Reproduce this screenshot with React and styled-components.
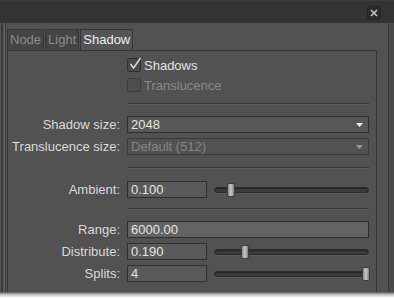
import styled, { createGlobalStyle } from 'styled-components'

const GlobalStyle = createGlobalStyle`
  html, body {
    margin: 0;
    padding: 0;
    background: #ffffff;
  }
  body {
    font-family: "Liberation Sans", Arial, sans-serif;
    font-size: 13px;
  }
`

const Window = styled.div`
  width: 394px;
  height: 298px;
  display: flex;
  flex-direction: column;
  background: #525252;
  overflow: hidden;
`

const TitleBar = styled.div`
  flex: none;
  height: 23px;
  box-sizing: border-box;
  background: #333333;
  border-top: 1px solid #3b3b3b;
  display: flex;
  justify-content: flex-end;
  align-items: flex-start;
  padding: 5px 13px 0 0;
`

const CloseButton = styled.button`
  width: 14px;
  height: 14px;
  padding: 0;
  box-sizing: border-box;
  background: #2c2c2c;
  border: 1px solid #262626;
  border-radius: 2px;
  display: flex;
  align-items: center;
  justify-content: center;
`

const Body = styled.div`
  flex: none;
  height: 269px;
  display: flex;
  overflow: hidden;
`

const LeftEdge = styled.div`
  flex: none;
  width: 7px;
  background: linear-gradient(
    to right,
    #555555 0 1px,
    #3a3a3a 1px 3px,
    #555555 3px 4px,
    #626262 4px 5px,
    #3a3a3a 5px 6px,
    #525252 6px 7px
  );
`

const RightEdge = styled.div`
  flex: none;
  width: 17px;
  background: linear-gradient(
    to right,
    #525252 0 11px,
    #383838 11px 12px,
    #4a4a4a 12px 17px
  );
`

const TabWidget = styled.div`
  width: 370px;
  flex: none;
  display: flex;
  flex-direction: column;
  padding-top: 6px;
`

const TabBar = styled.div`
  display: flex;
  gap: 1px;
  height: 21px;
`

const Tab = styled.div`
  box-sizing: border-box;
  height: 21px;
  padding: 0 2px;
  line-height: 20px;
  border: 1px solid #363636;
  border-bottom: none;
  background: ${p => (p.$active ? '#555555' : '#454545')};
  color: ${p => (p.$active ? '#ececec' : '#8c8c8c')};
`

const Panel = styled.div`
  flex: 1;
  border: 1px solid #363636;
  border-bottom: none;
  padding-top: 4px;
  display: flex;
  flex-direction: column;
`

const Row = styled.div`
  display: grid;
  grid-template-columns: 112px 242px;
  column-gap: 7px;
  align-items: center;
  height: ${p => p.$h || 17}px;
  margin-top: ${p => p.$mt || 0}px;
`

const Label = styled.div`
  grid-column: 1;
  text-align: right;
  white-space: nowrap;
  color: #dadada;
`

const Cell = styled.div`
  grid-column: 2;
  display: flex;
  align-items: center;
  height: 100%;
`

const CheckLabel = styled.label`
  display: flex;
  align-items: center;
  gap: 3px;
  color: ${p => (p.$disabled ? '#8a8a8a' : '#e2e2e2')};
`

const Box = styled.span`
  position: relative;
  width: 14px;
  height: 14px;
  box-sizing: border-box;
  border: 1px solid ${p => (p.$disabled ? '#3c3c3c' : '#303030')};
  border-radius: 2px;
  background: ${p => (p.$disabled ? '#4e4e4e' : '#4a4a4a')};
`

const Tick = styled.svg`
  position: absolute;
  left: 1px;
  top: -2px;
`

const Separator = styled.div`
  height: 0;
  margin: ${p => p.$mt}px 0 0 120px;
  width: 241px;
  border-top: 1px solid #363636;
  border-bottom: 1px solid #5e5e5e;
`

const Field = styled.div`
  box-sizing: border-box;
  width: ${p => (p.$w ? `${p.$w}px` : '100%')};
  flex: none;
  height: 17px;
  line-height: 15px;
  padding: 0 3px;
  border: 1px solid ${p => (p.$disabled ? '#3a3a3a' : '#2f2f2f')};
  background: ${p => p.$bg || '#5a5a5a'};
  color: ${p => (p.$disabled ? '#858585' : '#e4e4e4')};
  white-space: nowrap;
`

const Combo = styled(Field)`
  display: flex;
  align-items: center;
  justify-content: space-between;
  padding-right: 5px;
  background: ${p => (p.$disabled ? '#525252' : '#575757')};
`

const Groove = styled.div`
  position: relative;
  margin-left: 7px;
  width: 155px;
  height: 6px;
  box-sizing: border-box;
  border-radius: 3px;
  background: #3c3c3c;
  border: 1px solid #2c2c2c;
  box-shadow: 0 1px 0 #5c5c5c, inset 0 1px 1px #242424;
`

const Handle = styled.div`
  position: absolute;
  top: -5px;
  width: 8px;
  height: 14px;
  box-sizing: border-box;
  border-radius: 2px;
  border: 1px solid #3e3e3e;
  background: linear-gradient(to right, #8a8a8a, #c6c6c6 45%, #a4a4a4 75%, #7c7c7c);
`

const BottomFade = styled.div`
  flex: 1;
  background: linear-gradient(to bottom, #525252, #bdbdbd 40%, #ffffff);
`

function Check({ label, checked, disabled }) {
  return (
    <CheckLabel $disabled={disabled}>
      <Box $disabled={disabled}>
        {checked && (
          <Tick width="13" height="13" viewBox="0 0 13 13">
            <path d="M1.5 7 L4.5 11 L11.5 1" fill="none" stroke="#e0e0e0" strokeWidth="1.4" />
          </Tick>
        )}
      </Box>
      {label}
    </CheckLabel>
  )
}

function ComboBox({ value, disabled }) {
  return (
    <Combo $disabled={disabled}>
      <span>{value}</span>
      <svg width="7" height="4" viewBox="0 0 7 4">
        <path d="M0 0 H7 L3.5 4 Z" fill={disabled ? '#9a9a9a' : '#f0f0f0'} />
      </svg>
    </Combo>
  )
}

function Slider({ pos }) {
  return (
    <Groove>
      <Handle style={{ left: Math.round(pos * 148) - 1 }} />
    </Groove>
  )
}

export default function App() {
  return (
    <>
      <GlobalStyle />
      <Window>
        <TitleBar>
          <CloseButton aria-label="Close">
            <svg width="8" height="8" viewBox="0 0 8 8">
              <path d="M1 1 L7 7 M7 1 L1 7" stroke="#c8c8c8" strokeWidth="1.5" />
            </svg>
          </CloseButton>
        </TitleBar>
        <Body>
          <LeftEdge />
          <TabWidget>
            <TabBar>
              <Tab>Node</Tab>
              <Tab>Light</Tab>
              <Tab $active>Shadow</Tab>
            </TabBar>
            <Panel>
              <Row $h={20}>
                <Cell>
                  <Check label="Shadows" checked />
                </Cell>
              </Row>
              <Row $h={20}>
                <Cell>
                  <Check label="Translucence" disabled />
                </Cell>
              </Row>
              <Separator $mt={8} />
              <Row $mt={11}>
                <Label>Shadow size:</Label>
                <Cell>
                  <ComboBox value="2048" />
                </Cell>
              </Row>
              <Row $mt={5}>
                <Label>Translucence size:</Label>
                <Cell>
                  <ComboBox value="Default (512)" disabled />
                </Cell>
              </Row>
              <Separator $mt={12} />
              <Row $mt={12}>
                <Label>Ambient:</Label>
                <Cell>
                  <Field $w={80}>0.100</Field>
                  <Slider pos={0.088} />
                </Cell>
              </Row>
              <Separator $mt={10} />
              <Row $mt={11}>
                <Label>Range:</Label>
                <Cell>
                  <Field $bg="#636363">6000.00</Field>
                </Cell>
              </Row>
              <Row $mt={5}>
                <Label>Distribute:</Label>
                <Cell>
                  <Field $w={80}>0.190</Field>
                  <Slider pos={0.182} />
                </Cell>
              </Row>
              <Row $mt={5}>
                <Label>Splits:</Label>
                <Cell>
                  <Field $w={80}>4</Field>
                  <Slider pos={1} />
                </Cell>
              </Row>
            </Panel>
          </TabWidget>
          <RightEdge />
        </Body>
        <BottomFade />
      </Window>
    </>
  )
}
